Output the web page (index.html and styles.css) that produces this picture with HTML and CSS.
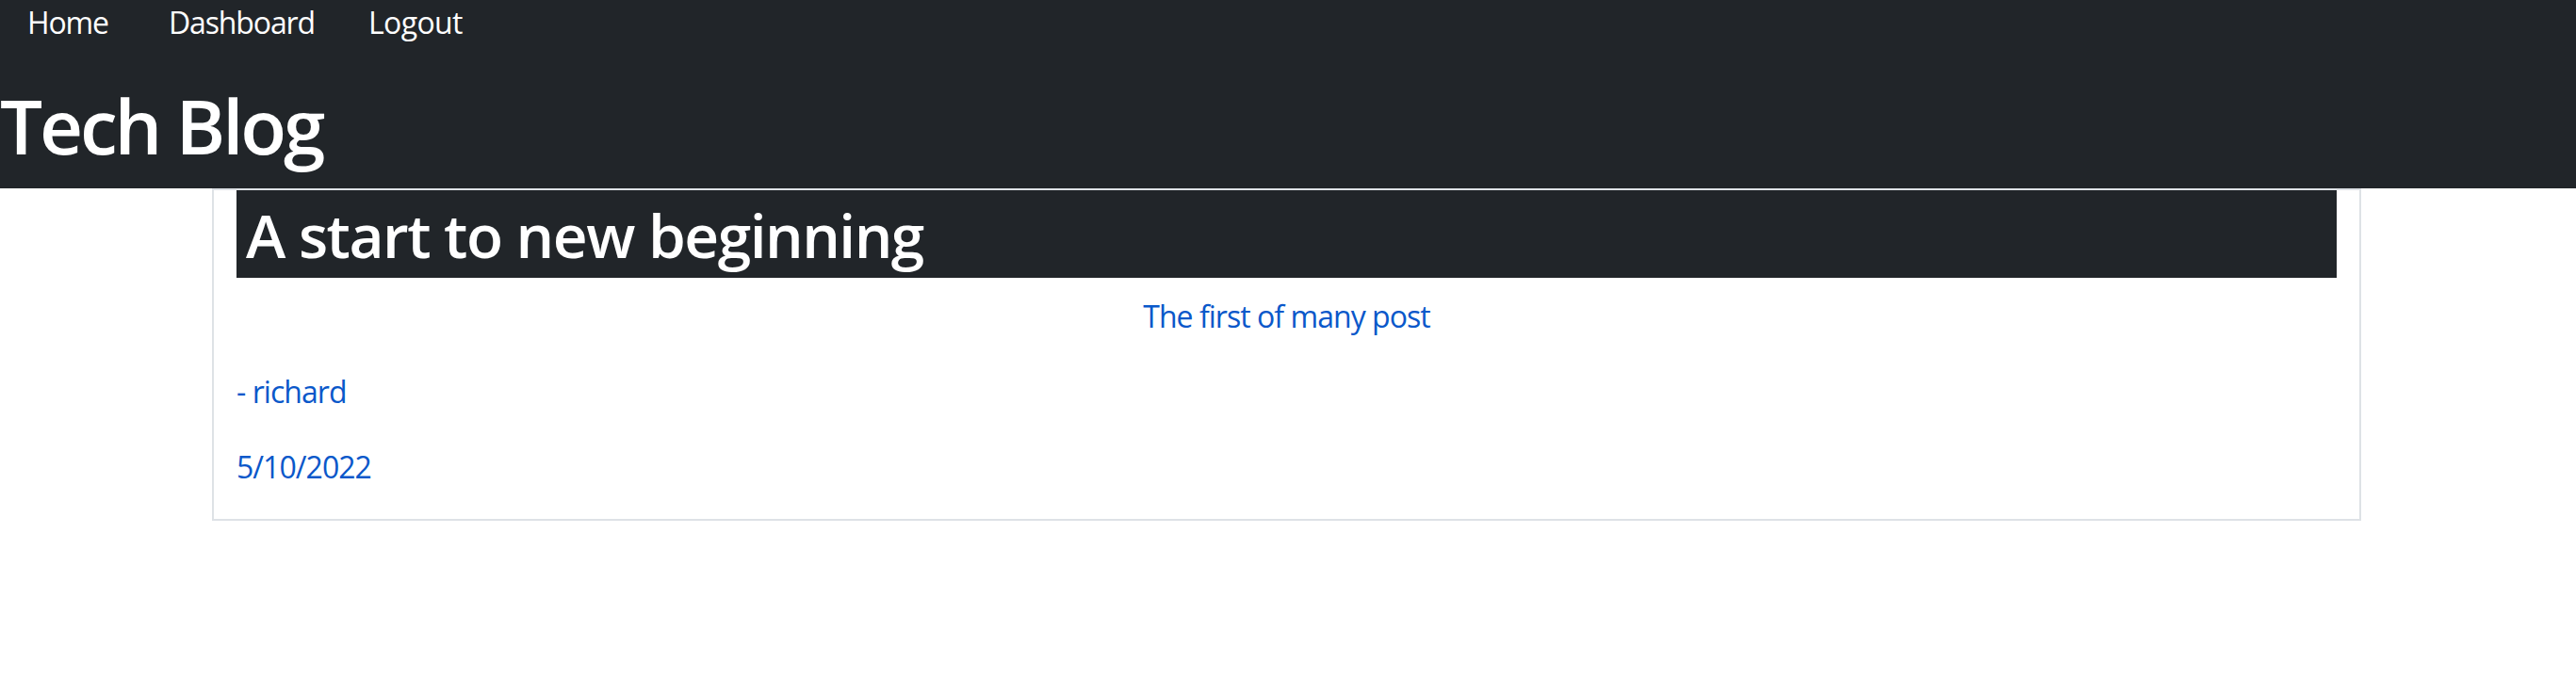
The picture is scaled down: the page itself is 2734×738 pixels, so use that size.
FILE: index.html
```html
<!DOCTYPE html>
<html lang="en">
<head>
<meta charset="utf-8">
<title>Tech Blog</title>
<link rel="stylesheet" href="styles.css">
</head>
<body>
<header class="site-header">
  <nav class="nav">
    <a class="nav-link" href="#">Home</a>
    <a class="nav-link" href="#">Dashboard</a>
    <a class="nav-link nav-link-last" href="#">Logout</a>
  </nav>
  <h1 class="site-title">Tech Blog</h1>
</header>
<main class="container">
  <article class="post-card">
    <h2 class="post-title">A start to new beginning</h2>
    <p class="post-text post-body">The first of many post</p>
    <p class="post-text">- richard</p>
    <p class="post-text">5/10/2022</p>
  </article>
</main>
</body>
</html>
```

FILE: styles.css
```css
html, body {
  margin: 0;
  padding: 0;
  background: #ffffff;
}

body {
  font-family: "Open Sans", "Noto Sans", sans-serif;
  font-size: 32px;
  line-height: 48px;
  letter-spacing: -0.03em;
  color: #212529;
}

.site-header {
  background: #212529;
  padding-bottom: 19px;
}

.nav {
  display: flex;
  height: 48px;
}

.nav-link {
  display: block;
  padding: 0 32px;
  color: #ffffff;
  text-decoration: none;
  line-height: 48px;
  letter-spacing: -0.035em;
}

.nav-link:first-child {
  padding-left: 29px;
}

.nav-link-last {
  margin-left: -7px;
  letter-spacing: -0.02em;
}

.site-title {
  margin: 37px 0 0 0;
  font-size: 80px;
  line-height: 96px;
  font-weight: 600;
  letter-spacing: -0.04em;
  color: #ffffff;
}

.container {
  padding: 0 228px 0 225px;
}

.post-card {
  border: 2px solid #dee2e6;
  padding: 0 24px;
}

.post-title {
  margin: 0 0 16px 0;
  padding: 10px 10px 6px 10px;
  background: #212529;
  color: #ffffff;
  font-size: 64px;
  line-height: 76.8px;
  font-weight: 600;
  letter-spacing: -1.5px;
}

.post-text {
  margin: 0 0 31px 0;
  padding-top: 1px;
  color: #0a58ca;
}

.post-body {
  text-align: center;
}
```
